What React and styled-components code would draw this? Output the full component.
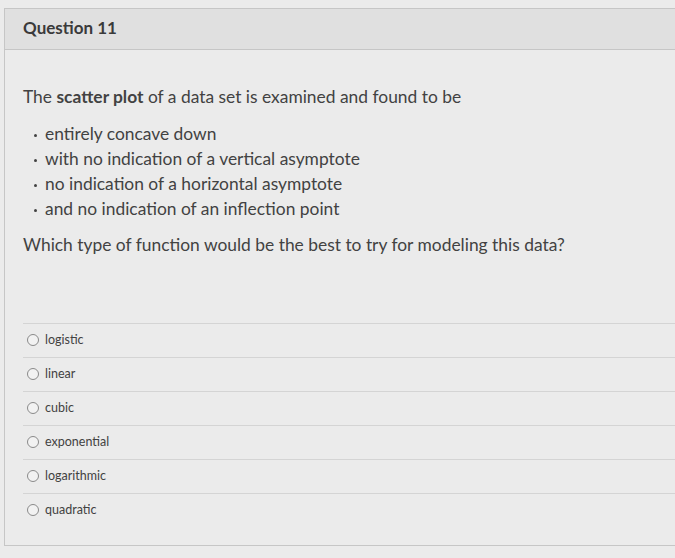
import React from 'react'
import styled, { createGlobalStyle } from 'styled-components';

const GlobalStyle = createGlobalStyle`
  html, body {
    margin: 0;
    padding: 0;
    background: #ebebeb;
    overflow: hidden;
  }
  body {
    font-family: Lato, "Liberation Sans", sans-serif;
    color: #424242;
  }
`

const criteria = [
  'entirely concave down',
  'with no indication of a vertical asymptote',
  'no indication of a horizontal asymptote',
  'and no indication of an inflection point',
]

const answers = ['logistic', 'linear', 'cubic', 'exponential', 'logarithmic', 'quadratic']

const App = () => {
  return (
    <Page>
      <GlobalStyle />
      <Panel>
        <Header>Question 11</Header>
        <Body>
          <Text>The <strong>scatter plot</strong> of a data set is examined and found to be</Text>
          <List>
            {criteria.map(c => <Item key={c}>{c}</Item>)}
          </List>
          <Text>Which type of function would be the best to try for modeling this data?</Text>
          <Answers>
            {answers.map(a => (
              <Answer key={a}>
                <Radio />
                <Label>{a}</Label>
              </Answer>
            ))}
          </Answers>
        </Body>
      </Panel>
    </Page>
  )
}

export default App

const Page = styled.div`
  padding: 8px 0 0 4px;
  width: 675px;
  height: 558px;
  box-sizing: border-box;
`

const Panel = styled.div`
  width: 720px;
  border: 1px solid #c6c6c6;
  background: #ebebeb;
`

const Header = styled.div`
  height: 41px;
  box-sizing: border-box;
  padding: 0 18px 3px;
  display: flex;
  align-items: center;
  background: #e0e0e0;
  border-bottom: 1px solid #c6c6c6;
  font-size: 17px;
  font-weight: 700;
  color: #3a3a3a;
`

const Body = styled.div`
  padding: 34px 0 18px 18px;
`

const Text = styled.p`
  margin: 0;
  font-size: 17.4px;
  line-height: 25px;

  strong {
    font-weight: 700;
  }
`

const List = styled.ul`
  margin: 12px 0 11px;
  padding: 0 0 0 22px;
  list-style: none;
`

const Item = styled.li`
  position: relative;
  font-size: 17.4px;
  line-height: 25px;

  &::before {
    content: '';
    position: absolute;
    left: -11px;
    top: 13px;
    width: 3px;
    height: 3px;
    border-radius: 50%;
    background: #424242;
  }
`

const Answers = styled.div`
  margin-top: 66px;
`

const Answer = styled.div`
  height: 34px;
  box-sizing: border-box;
  border-top: 1px solid #d4d4d4;
  display: flex;
  align-items: center;
  padding-left: 4px;
  padding-bottom: 2px;
  gap: 6px;
`

const Radio = styled.span`
  width: 12px;
  height: 12px;
  box-sizing: border-box;
  border: 1px solid #8a8a8a;
  border-radius: 50%;
  background: #f2f2f2;
`

const Label = styled.span`
  font-size: 12.5px;
  color: #424242;
`
